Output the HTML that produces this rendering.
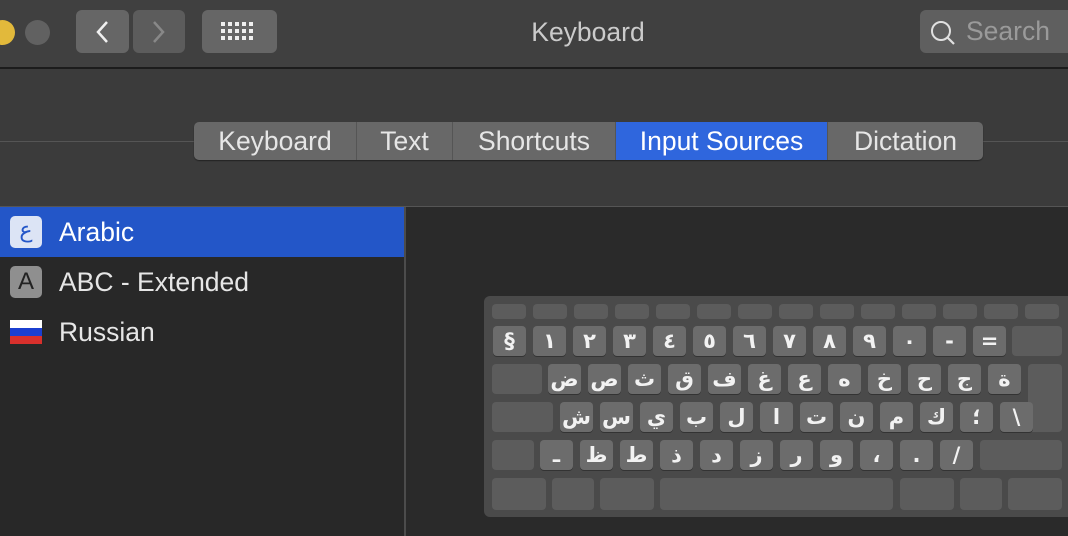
<!DOCTYPE html>
<html><head><meta charset="utf-8"><style>
*{margin:0;padding:0;box-sizing:border-box}
body{width:1068px;height:536px;overflow:hidden;background:#3b3b3b;font-family:"Liberation Sans","DejaVu Sans",sans-serif;position:relative}
.a{position:absolute}
.tb{left:0;top:0;width:1068px;height:69px;background:#404040;border-bottom:2px solid #1c1c1c}
.btn{background:#666;border-radius:6px;height:43px;top:10px}
.tab{top:122px;height:38px;color:#e6e6e6;font-size:26.5px;line-height:38px;text-align:center;background:#686868;border-right:1px solid #555}
.k{position:absolute;background:#5c5c5c;border-radius:4px}
.l{background:#6c6c6c;color:#f2f2f2;font-weight:bold;font-size:21px;text-align:center;line-height:30px;font-family:"DejaVu Sans","Liberation Sans",sans-serif;box-shadow:0 1px 0 #333}
.row{position:absolute;left:0;width:404px;height:50px;font-size:26.5px;color:#e6e6e6;line-height:50px;padding-left:59px}
</style></head><body>
<div class="a tb"></div>
<div class="a" style="left:-10px;top:20px;width:25px;height:25px;border-radius:50%;background:#e2b93b"></div>
<div class="a" style="left:25px;top:20px;width:25px;height:25px;border-radius:50%;background:#616161"></div>
<div class="a btn" style="left:76px;width:53px"></div>
<div class="a btn" style="left:133px;width:52px;background:#5c5c5c"></div>
<svg class="a" style="left:92px;top:18px" width="24" height="28"><path d="M15 4 L6 14 L15 24" stroke="#f0f0f0" stroke-width="2.5" fill="none"/></svg>
<svg class="a" style="left:148px;top:18px" width="24" height="28"><path d="M6 4 L15 14 L6 24" stroke="#888" stroke-width="2.5" fill="none"/></svg>
<div class="a btn" style="left:202px;width:75px"></div>
<svg class="a" style="left:221px;top:21px" width="36" height="22">
<g fill="#f0f0f0"><rect x="0" y="1" width="4" height="4"/><rect x="7" y="1" width="4" height="4"/><rect x="14" y="1" width="4" height="4"/><rect x="21" y="1" width="4" height="4"/><rect x="28" y="1" width="4" height="4"/>
<rect x="0" y="8" width="4" height="4"/><rect x="7" y="8" width="4" height="4"/><rect x="14" y="8" width="4" height="4"/><rect x="21" y="8" width="4" height="4"/><rect x="28" y="8" width="4" height="4"/>
<rect x="0" y="15" width="4" height="4"/><rect x="7" y="15" width="4" height="4"/><rect x="14" y="15" width="4" height="4"/><rect x="21" y="15" width="4" height="4"/><rect x="28" y="15" width="4" height="4"/></g></svg>
<div class="a" style="left:488px;top:17px;width:200px;text-align:center;color:#cbcbcb;font-size:26.5px">Keyboard</div>
<div class="a btn" style="left:920px;width:160px;background:#5f5f5f"></div>
<svg class="a" style="left:929px;top:19px" width="28" height="28"><circle cx="12" cy="12" r="9" stroke="#e0e0e0" stroke-width="2" fill="none"/><path d="M18 18 L25 25" stroke="#e0e0e0" stroke-width="2.2"/></svg>
<div class="a" style="left:966px;top:16px;color:#9a9a9a;font-size:26.5px">Search</div>
<div class="a" style="left:0;top:141px;width:1068px;height:1px;background:#555"></div>
<div class="a" style="left:194px;top:122px;width:789px;height:38px;border-radius:5px;overflow:hidden;box-shadow:0 1px 1px #222">
<div class="a tab" style="left:0;width:163px;top:0">Keyboard</div>
<div class="a tab" style="left:163px;width:96px;top:0">Text</div>
<div class="a tab" style="left:259px;width:163px;top:0">Shortcuts</div>
<div class="a tab" style="left:422px;width:212px;top:0;background:#2f66dd;color:#fff">Input Sources</div>
<div class="a tab" style="left:634px;width:155px;top:0;border:none">Dictation</div>
</div>
<div class="a" style="left:0;top:206px;width:1068px;height:1px;background:#555"></div>
<div class="a" style="left:0;top:207px;width:404px;height:329px;background:#282828"></div>
<div class="a" style="left:404px;top:207px;width:2px;height:329px;background:#4c4c4c"></div>
<div class="a" style="left:406px;top:207px;width:662px;height:329px;background:#2a2a2a"></div>
<div class="row" style="top:207px;background:#2356c8;color:#fff">Arabic</div>
<div class="a" style="left:10px;top:216px;width:32px;height:32px;border-radius:5px;background:#dce4f5;color:#2356c8;font-size:22px;text-align:center;line-height:30px;font-family:'DejaVu Sans',sans-serif">ع</div>
<div class="row" style="top:257px">ABC - Extended</div>
<div class="a" style="left:10px;top:266px;width:32px;height:32px;border-radius:5px;background:#8f8f8f;color:#222;font-size:24px;text-align:center;line-height:32px">A</div>
<div class="row" style="top:307px">Russian</div>
<div class="a" style="left:10px;top:320px;width:32px;height:24px;background:linear-gradient(#fff 0 33%,#1b3fd0 33% 66%,#d8302c 66%)"></div>
<div class="a" style="left:484px;top:296px;width:590px;height:221px;background:#4a4a4a;border-radius:6px" id="kb"></div>
<div id="keys"></div>
<script>
var h='';function k(x,y,w,hh,t){h+='<div class="k'+(t!==undefined?' l':'')+'" style="left:'+x+'px;top:'+y+'px;width:'+w+'px;height:'+hh+'px">'+(t||'')+'</div>';}
for(var i=0;i<14;i++){k(492+i*41,304,34,15);}
var n=['§','١','٢','٣','٤','٥','٦','٧','٨','٩','٠','-','='];n.forEach(function(c,i){k(493+i*40,326,33,30,c)});k(1012,326,50,30);
k(492,364,50,30);var q=['ض','ص','ث','ق','ف','غ','ع','ه','خ','ح','ج','ة'];q.forEach(function(c,i){k(548+i*40,364,33,30,c)});k(1028,364,34,68);
k(492,402,61,30);var a=['ش','س','ي','ب','ل','ا','ت','ن','م','ك','؛','\\'];a.forEach(function(c,i){k(560+i*40,402,33,30,c)});
k(492,440,42,30);var z=['ـ','ظ','ط','ذ','د','ز','ر','و','،','.','/'];z.forEach(function(c,i){k(540+i*40,440,33,30,c)});k(980,440,82,30);
[[492,54],[552,42],[600,54],[660,233],[900,54],[960,42],[1008,54]].forEach(function(p){k(p[0],478,p[1],32)});
document.getElementById('keys').innerHTML=h;
</script>
</body></html>
